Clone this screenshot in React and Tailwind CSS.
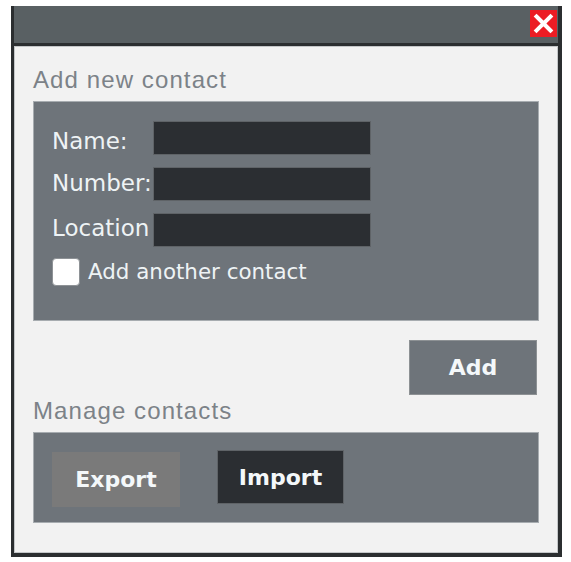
export default function App() {
  const labelCls =
    "w-[101px] shrink-0 whitespace-nowrap font-['DejaVu_Sans',Verdana,sans-serif] text-[23px] leading-[26px] text-[#eef3f5]";
  const inputCls = "w-[218px] h-[34px] bg-[#2b2e32] border border-[#5f6367]";
  const btnText = "font-['DejaVu_Sans',Verdana,sans-serif] font-bold text-[22px] text-[#f4f8fa]";
  return (
    <div className="w-[571px] h-[562px] bg-white pt-[6px] pl-[11px]">
      <div className="w-[551px] h-[551px] bg-[#2b2e30] flex flex-col pl-[3px] pr-[4px] pb-[4px]">
        <div className="h-[37px] shrink-0 bg-[#596063] flex justify-end items-start pt-[4px] pr-[1px]">
          <div className="w-[27px] h-[27px] bg-[#ec1c24] flex items-center justify-center">
            <svg width="27" height="27" viewBox="0 0 27 27">
              <path d="M6.5 6.5 L20.5 20.5 M20.5 6.5 L6.5 20.5" stroke="white" strokeWidth="4" strokeLinecap="square" />
            </svg>
          </div>
        </div>
        <div className="mt-[3px] flex-1 bg-[#f2f2f2] border border-[#c4c7c9] px-[18px] pt-[19px] flex flex-col">
          <div className="font-['Liberation_Sans',Arial,sans-serif] text-[24px] leading-[28px] tracking-[1.1px] text-[#7c8288]">
            Add new contact
          </div>
          <div className="mt-[7px] h-[220px] bg-[#6e747a] border border-[#a7acb0] pl-[18px] pt-[19px] flex flex-col gap-[12px]">
            <div className="flex items-start">
              <div className={labelCls + " pt-[7px]"}>Name:</div>
              <div className={inputCls}></div>
            </div>
            <div className="flex items-start">
              <div className={labelCls + " pt-[3px]"}>Number:</div>
              <div className={inputCls}></div>
            </div>
            <div className="flex items-start">
              <div className={labelCls + " pt-[2px]"}>Location</div>
              <div className={inputCls}></div>
            </div>
            <div className="flex items-center gap-[8px] -mt-[1px]">
              <div className="w-[28px] h-[28px] bg-white rounded-[4px] border border-[#8e9296]"></div>
              <div className="font-['DejaVu_Sans',Verdana,sans-serif] text-[21.4px] leading-[26px] text-[#eef3f5] whitespace-nowrap">
                Add another contact
              </div>
            </div>
          </div>
          <div className="mt-[19px] flex justify-end pr-[2px]">
            <div className={"w-[128px] h-[55px] bg-[#6e747a] border border-[#8d9194] flex items-center justify-center " + btnText}>
              Add
            </div>
          </div>
          <div className="mt-[2px] font-['Liberation_Sans',Arial,sans-serif] text-[24px] leading-[28px] tracking-[1.1px] text-[#7c8288]">
            Manage contacts
          </div>
          <div className="mt-[7px] h-[91px] bg-[#6e747a] border border-[#a7acb0] pl-[18px] flex items-start gap-[37px]">
            <div className={"mt-[19px] w-[128px] h-[55px] bg-[#7a7a7a] flex items-center justify-center " + btnText}>
              Export
            </div>
            <div className={"mt-[17px] w-[127px] h-[54px] bg-[#2b2e32] border border-[#5f6367] flex items-center justify-center " + btnText}>
              Import
            </div>
          </div>
        </div>
      </div>
    </div>
  );
}
